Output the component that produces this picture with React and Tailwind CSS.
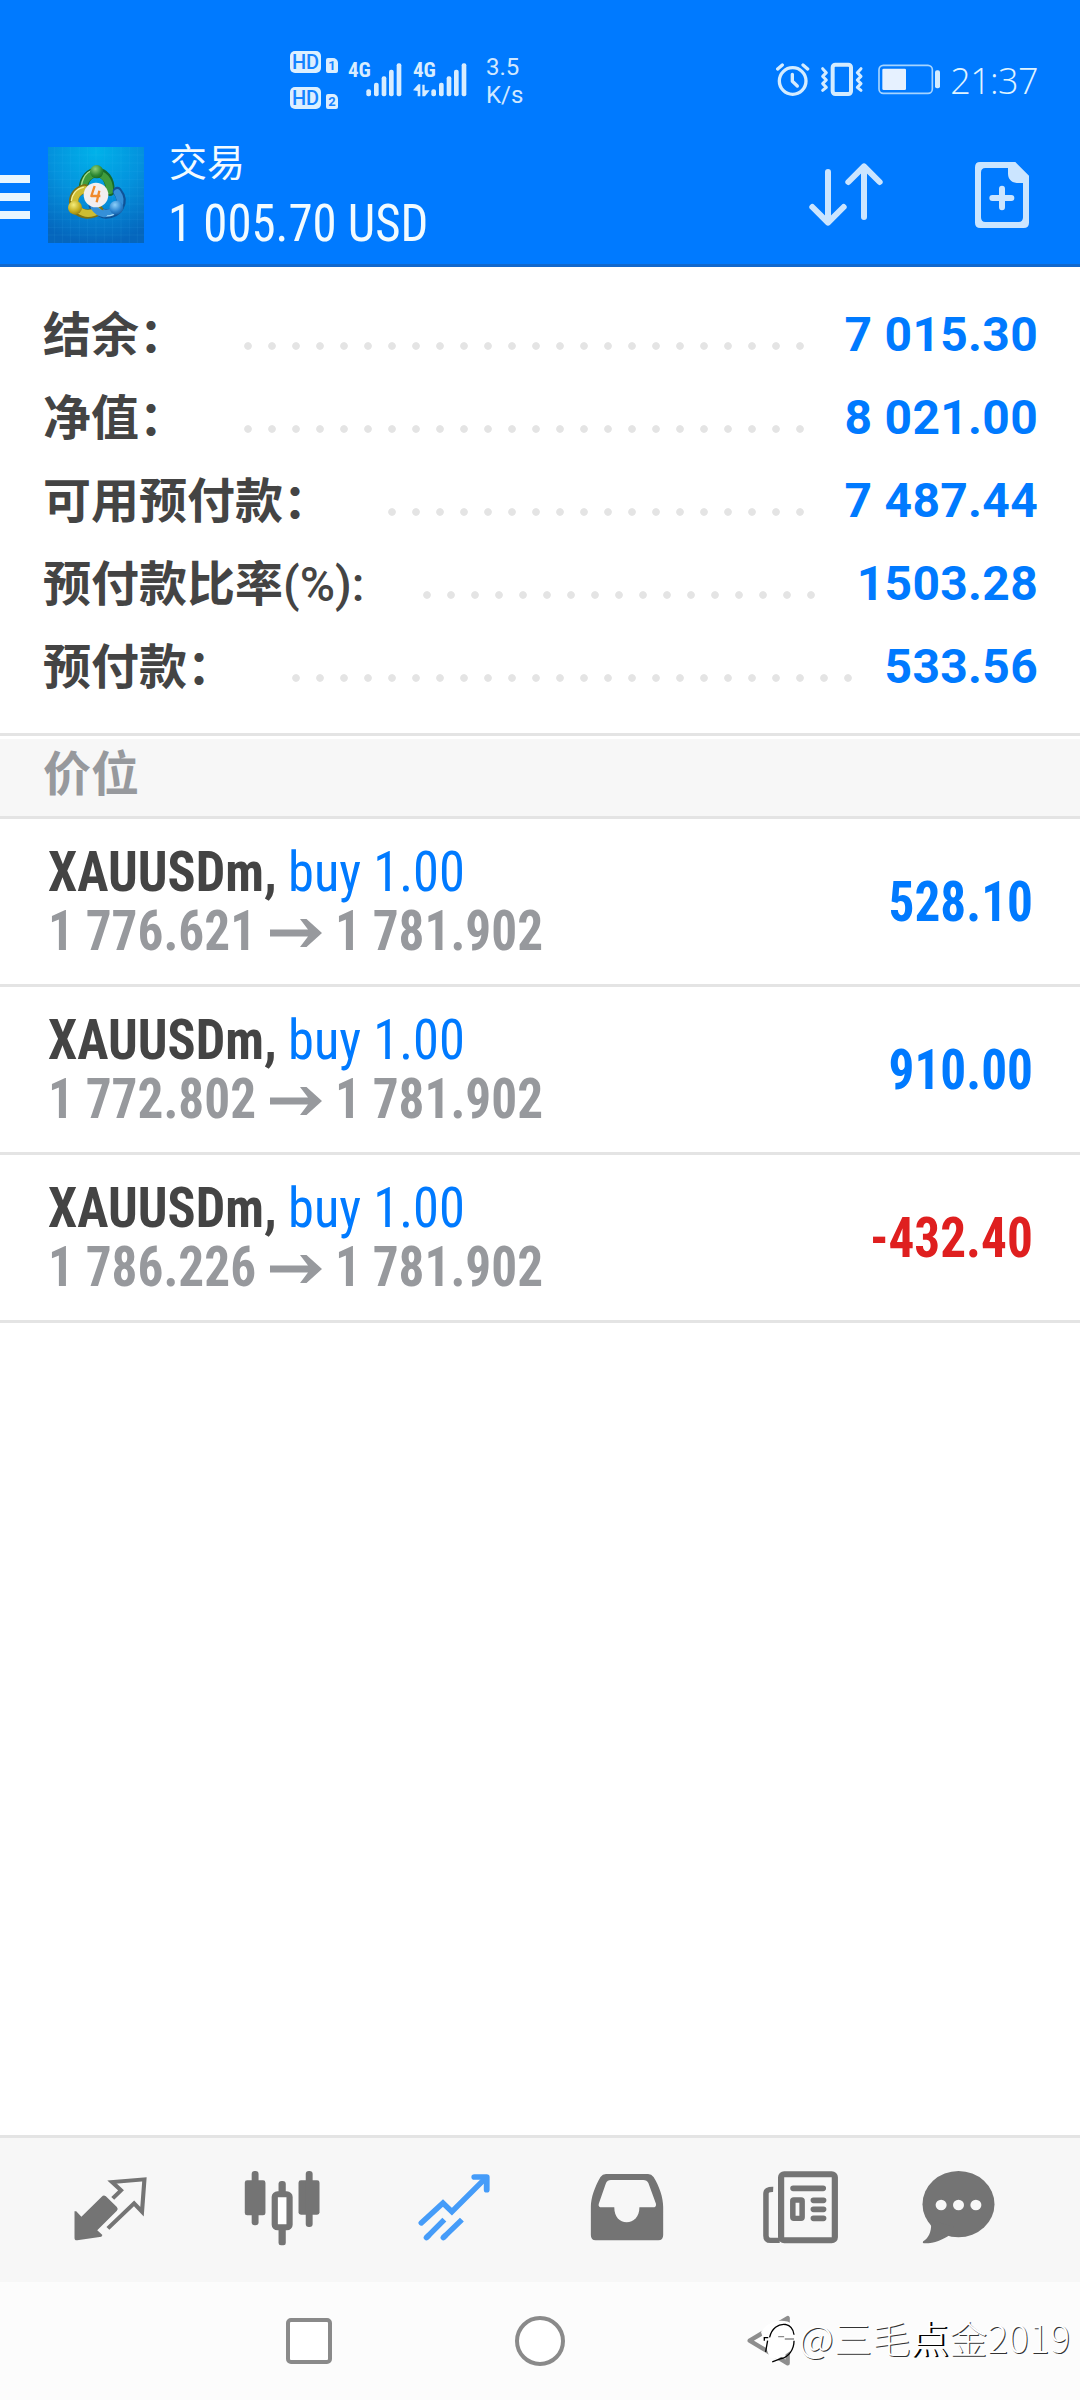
const summary = [
  { label: "结余：", value: "7 015.30", labelW: "w-[193px]", dotsW: "w-[576px]" },
  { label: "净值：", value: "8 021.00", labelW: "w-[193px]", dotsW: "w-[576px]" },
  { label: "可用预付款：", value: "7 487.44", labelW: "w-[337px]", dotsW: "w-[432px]" },
  { label: "预付款比率", suffix: "(%):", value: "1503.28", labelW: "w-[372px]", dotsW: "w-[408px]" },
  { label: "预付款：", value: "533.56", labelW: "w-[241px]", dotsW: "w-[576px]" },
];

const trades = [
  { open: "1 776.621", close: "1 781.902", profit: "528.10", color: "text-[#007aff]" },
  { open: "1 772.802", close: "1 781.902", profit: "910.00", color: "text-[#007aff]" },
  { open: "1 786.226", close: "1 781.902", profit: "-432.40", color: "text-[#df1f1f]" },
];

const cjk = "font-['Noto_Sans_CJK_SC',sans-serif]";

function HdBadge({ sim }) {
  return (
    <div className="flex h-[22px] gap-[5px]">
      <div className="flex h-[22px] w-[31px] items-center justify-center rounded-[5px] bg-[#dcefff] font-['Roboto',sans-serif] text-[20px] leading-none font-medium text-[#1583ff]">
        HD
      </div>
      <div className="mt-[7px] flex h-[15px] w-[12px] items-center justify-center rounded-[2px] rounded-tr-[5px] bg-[#dcefff] font-['Roboto',sans-serif] text-[13px] leading-none font-bold text-[#1583ff]">
        {sim}
      </div>
    </div>
  );
}

function Signal({ data }) {
  return (
    <div className="relative h-[34px] w-[54px]">
      <span className="absolute top-0 left-0 font-['Roboto',sans-serif] text-[21px] leading-[15px] font-bold font-stretch-75% text-[#d8edff]">
        4G
      </span>
      <svg viewBox="236 98 162 102" className="h-[34px] w-[54px]" fill="#d8edff">
        <rect x="291" y="177" width="14" height="21" rx="6" />
        <rect x="314" y="157" width="14" height="41" rx="6" />
        <rect x="337" y="138" width="14" height="60" rx="6" />
        <rect x="359" y="118" width="14" height="80" rx="6" />
        <rect x="382" y="99" width="14" height="99" rx="6" />
        {data && (
          <path d="M236 180L252 162H258V198H250V182ZM264 163H271V180H286L272 198H264Z" />
        )}
      </svg>
    </div>
  );
}

function StatusBar() {
  return (
    <div className="flex h-[96px] items-start pt-[50px] pr-[42px] pl-[290px]">
      <div className="mt-px flex flex-col gap-[14px]">
        <HdBadge sim="1" />
        <HdBadge sim="2" />
      </div>
      <div className="mt-[13px] ml-[10px] flex gap-[11px]">
        <Signal />
        <Signal data />
      </div>
      <div className="mt-[3px] ml-[19px] font-['Roboto',sans-serif] text-[24px] leading-[28px] text-[#d0e8ff]">
        <p>3.5</p>
        <p>K/s</p>
      </div>
      <div className="mt-[12px] ml-auto flex items-start">
        <svg viewBox="48 66 102 105" className="h-[35px] w-[34px]" fill="none" stroke="#d4ecff" strokeWidth="10" strokeLinecap="round" strokeLinejoin="round">
          <circle cx="98" cy="123" r="40" />
          <path d="M97 103V124L112 138" />
          <path d="M53 87L67 75M129 75L143 87" />
        </svg>
        <svg viewBox="180 66 132 105" className="ml-[10px] h-[35px] w-[44px]" fill="none" stroke="#d4ecff" strokeWidth="9" strokeLinecap="round" strokeLinejoin="round">
          <rect x="218" y="74" width="55" height="88" rx="8" strokeWidth="12" />
          <path d="M188 86L199 98L188 109L199 120L188 131L199 142L188 151" />
          <path d="M303 86L292 98L303 109L292 120L303 131L292 142L303 151" />
        </svg>
        <svg viewBox="354 66 189 105" className="ml-[14px] h-[35px] w-[63px]">
          <rect x="357" y="76" width="160" height="84" rx="13" fill="none" stroke="#a5d4ff" strokeWidth="5" />
          <rect x="367" y="86" width="71" height="64" rx="4" fill="#e6f1ff" />
          <rect x="525" y="91" width="15" height="54" rx="6" fill="#d4ecff" />
        </svg>
        <span className="ml-[9px] font-['Open_Sans',sans-serif] text-[36px] leading-[38px] font-light tracking-[-0.6px] text-[#e0f4ff]">
          21:37
        </span>
      </div>
    </div>
  );
}

function Logo() {
  return (
    <svg viewBox="144 51 288 288" className="h-24 w-24">
      <defs>
        <radialGradient id="bg" cx="0.5" cy="0.05" r="0.95">
          <stop offset="0" stopColor="#00b2ea" />
          <stop offset="0.5" stopColor="#0492dd" />
          <stop offset="1" stopColor="#0566bd" />
        </radialGradient>
        <radialGradient id="green" cx="0.4" cy="0.3" r="0.8">
          <stop offset="0" stopColor="#8fd07a" />
          <stop offset="0.6" stopColor="#2f8a34" />
          <stop offset="1" stopColor="#15601f" />
        </radialGradient>
        <radialGradient id="yellow" cx="0.4" cy="0.3" r="0.8">
          <stop offset="0" stopColor="#f4ec7c" />
          <stop offset="0.6" stopColor="#c3ac1c" />
          <stop offset="1" stopColor="#857410" />
        </radialGradient>
        <radialGradient id="blue" cx="0.4" cy="0.3" r="0.8">
          <stop offset="0" stopColor="#8dd0fa" />
          <stop offset="0.6" stopColor="#2b83cf" />
          <stop offset="1" stopColor="#0f559c" />
        </radialGradient>
      </defs>
      <rect x="144" y="51" width="288" height="288" fill="url(#bg)" />
      <path
        d="M164 51V339M188 51V339M212 51V339M238 51V339M263 51V339M288 51V339M313 51V339M338 51V339M363 51V339M388 51V339M412 51V339M144 75H432M144 99H432M144 124H432M144 149H432M144 173H432M144 198H432M144 222H432M144 246H432M144 268H432M144 292H432M144 315H432"
        stroke="#5cc4ff"
        strokeOpacity="0.14"
        strokeWidth="2"
      />
      <g fill="none" strokeLinecap="round">
        <path d="M250 176C252 112 332 108 330 184" stroke="#17692a" strokeWidth="28" />
        <path d="M250 174C254 118 328 114 329 182" stroke="#3f9c3c" strokeWidth="21" />
        <path d="M244 168C250 128 274 118 290 120" stroke="#a6dc8c" strokeWidth="4" />
        <path d="M352 184C378 216 354 252 318 252C300 250 288 240 280 228" stroke="#0f5398" strokeWidth="28" />
        <path d="M352 188C372 216 352 248 318 250C300 248 290 238 284 228" stroke="#3590d8" strokeWidth="21" />
        <path d="M280 236C296 258 320 262 340 254" stroke="#a5dafa" strokeWidth="4" />
        <path d="M254 176C212 186 206 244 258 252C276 253 288 248 296 240" stroke="#7d7113" strokeWidth="28" />
        <path d="M252 178C216 190 212 240 258 250C272 251 284 248 292 242" stroke="#cdbd33" strokeWidth="21" />
        <path d="M250 172C226 176 216 196 214 212" stroke="#f6f09a" strokeWidth="4" />
        <path d="M282 232C290 244 300 250 312 252" stroke="#3590d8" strokeWidth="20" />
      </g>
      <circle cx="290" cy="125" r="20" fill="url(#green)" />
      <circle cx="225" cy="233" r="21" fill="url(#yellow)" />
      <circle cx="349" cy="233" r="21" fill="url(#blue)" />
      <circle cx="288" cy="195" r="37" fill="#f1eef0" />
      <path d="M284 168L274 198H301M298 182L290 217" fill="none" stroke="#f08a2c" strokeWidth="7" strokeLinejoin="round" />
    </svg>
  );
}

function Header() {
  return (
    <header className="flex h-[171px] items-start border-b-[3px] border-[#1268cc]">
      <div className="mt-[79px] flex w-[30px] flex-col gap-[10px]">
        <div className="h-2 bg-[#e8f6ff]" />
        <div className="h-2 bg-[#e8f6ff]" />
        <div className="h-2 bg-[#e8f6ff]" />
      </div>
      <div className="mt-[51px] ml-[18px]">
        <Logo />
      </div>
      <div className="mt-[43px] ml-[24px] flex w-[272px] flex-col text-[#f2fbff]">
        <span className={`h-[53px] pl-px text-[38px] leading-[42px] ${cjk}`}>交易</span>
        <span className="origin-left scale-x-[0.957] font-['Roboto',sans-serif] text-[51px] leading-[64px] whitespace-nowrap font-stretch-75%">
          1 005.70 USD
        </span>
      </div>
      <svg viewBox="84 96 228 198" className="mt-[66px] ml-auto h-[66px] w-[76px]" fill="none" stroke="#cbe5ff" strokeWidth="18" strokeLinecap="round" strokeLinejoin="round">
        <path d="M144 126V276M97 231L144 278L191 231" />
        <path d="M252 261V110M205 156L252 109L299 156" />
      </svg>
      <svg viewBox="582 93 168 204" className="mt-[65px] mr-[50px] ml-[90px] h-[68px] w-[56px]">
        <path
          fillRule="evenodd"
          fill="#cbe5ff"
          d="M600 96H706L747 137V278Q747 294 731 294H601Q585 294 585 278V112Q585 96 600 96ZM616 114Q603 114 603 128V262Q603 276 616 276H716Q729 276 729 262V159H710C692 157 684 146 684 130V114Z"
        />
        <path d="M637 204H694M666 176V232" stroke="#cbe5ff" strokeWidth="18" strokeLinecap="round" />
      </svg>
    </header>
  );
}

function SummaryRow({ row }) {
  return (
    <div className="flex h-[83px] items-center pr-[42px] pl-[43px]">
      <span className={`shrink-0 pb-[7px] text-[48px] leading-[76px] font-bold whitespace-nowrap text-[#444444] ${row.labelW} ${cjk}`}>
        {row.label}
        {row.suffix && <span className="font-['Roboto',sans-serif] leading-none font-medium">{row.suffix}</span>}
      </span>
      <div
        className={`mt-[23px] h-[24px] shrink-0 bg-[radial-gradient(circle,#e4e4e4_3.4px,transparent_4.2px)] bg-[length:24px_24px] ${row.dotsW}`}
      />
      <span className="ml-auto font-['Roboto',sans-serif] text-[48px] leading-[83px] font-bold tracking-[0.3px] whitespace-nowrap text-[#007aff]">
        {row.value}
      </span>
    </div>
  );
}

function Trade({ trade }) {
  return (
    <div className="flex h-[168px] items-center justify-between border-b-[3px] border-[#e4e4e4] pr-[47px] pl-[48px] font-['Roboto',sans-serif] text-[55px] font-bold whitespace-nowrap font-stretch-75%">
      <div className="flex flex-col">
        <div className="flex h-[59px] items-center leading-[59px]">
          <span className="w-[240px] origin-left scale-x-[0.949] text-[#444444]">XAUUSDm,</span>
          <span className="origin-left scale-x-[0.955] font-normal text-[#007aff]">buy 1.00</span>
        </div>
        <div className="flex h-[59px] items-center leading-[59px] text-[#97999d]">
          <span className="w-[222px] origin-left scale-x-[0.932]">{trade.open}</span>
          <svg viewBox="0 0 52 28" className="mt-[3px] mr-[13px] h-[28px] w-[52px]" fill="#97999d">
            <path d="M0 10.500H38L30 0H36.500L52 14L36.500 28H30L38 17.500H0Z" />
          </svg>
          <span className="origin-left scale-x-[0.932]">{trade.close}</span>
        </div>
      </div>
      <span className={`mt-[2px] origin-right scale-x-[0.932] ${trade.color}`}>{trade.profit}</span>
    </div>
  );
}

const navSvg = "h-[80px] w-[83px]";

function TabBar() {
  return (
    <nav className="flex h-[147px] items-start border-t-[3px] border-[#e4e4e4] bg-[#f7f7f7] pt-[29px] pl-[24px] text-[#747474]">
      <div className="flex w-[172px] justify-center">
        <svg viewBox="199 170 241 240" preserveAspectRatio="none" className={navSvg} fill="currentColor">
          <path d="M215 303H220L235 319L294 259Q300 252 306 258L338 290Q343 296 338 301L281 360L296 374L293 379L223 390Q215 391 215 382Z" />
          <path d="M326 264L350 240L324 215L418 207L411 304L388 279L312 354" fill="none" stroke="currentColor" strokeWidth="12" />
        </svg>
      </div>
      <div className="flex w-[172px] justify-center">
        <svg viewBox="698 170 241 240" preserveAspectRatio="none" className={navSvg} fill="currentColor">
          <rect x="709" y="210" width="60" height="105" rx="7" />
          <rect x="729" y="182" width="20" height="163" rx="9" />
          <rect x="865" y="210" width="61" height="103" rx="7" />
          <rect x="886" y="182" width="20" height="168" rx="9" />
          <rect x="807" y="212" width="21" height="50" rx="9" />
          <rect x="807" y="345" width="21" height="60" rx="7" />
          <rect x="796" y="252" width="43" height="99" rx="8" fill="#fff" stroke="currentColor" strokeWidth="18" />
        </svg>
      </div>
      <div className="flex w-[172px] justify-center text-[#459cf9]">
        <svg viewBox="1198 170 241 240" preserveAspectRatio="none" className={navSvg} fill="none" stroke="currentColor" strokeWidth="16">
          <path d="M1222 338L1285 278L1311 304L1408 204" strokeLinecap="round" />
          <path d="M1376 200H1412V238" strokeWidth="17" strokeLinecap="round" strokeLinejoin="round" />
          <path d="M1237 382L1289 328M1286 382L1340 328" />
          <path d="M1237 382L1243 376M1286 382L1292 376" strokeLinecap="round" />
        </svg>
      </div>
      <div className="flex w-[172px] justify-center">
        <svg viewBox="129 170 241 240" preserveAspectRatio="none" className={navSvg} fill="currentColor">
          <path
            fillRule="evenodd"
            d="M190 191H312Q322 191 328 200C345 228 356 262 356 290V374Q356 390 342 390H160Q146 390 146 374V290C146 262 158 228 174 200Q180 191 190 191ZM204 209Q194 209 190 218L169 280Q166 291 178 291H214C214 320 230 336 250 336S287 320 287 291H326Q337 291 335 280L313 218Q309 209 298 209Z"
          />
        </svg>
      </div>
      <div className="flex w-[172px] justify-center">
        <svg viewBox="629 170 241 240" preserveAspectRatio="none" className={navSvg} fill="none" stroke="currentColor" strokeWidth="18">
          <rect x="699" y="191.500" width="156" height="198.500" rx="9" />
          <path d="M676 237Q655 236 655 250V376Q655 390 668 390H695" strokeWidth="16" />
          <path d="M734 234H821M793 270H822M793 297H822M793 324H822" strokeLinecap="round" strokeWidth="17" />
          <rect x="733" y="269" width="27" height="55" rx="3" strokeWidth="16" />
        </svg>
      </div>
      <div className="flex w-[148px] justify-center">
        <svg viewBox="1093 170 241 240" preserveAspectRatio="none" className={navSvg} fill="currentColor">
          <ellipse cx="1213.500" cy="281.500" rx="104.500" ry="99.500" />
          <path d="M1122 326Q1134 342 1134 349C1132 375 1120 387 1111 393Q1107 399 1116 399C1145 399 1168 387 1184 377L1200 350Z" />
          <g fill="#f7f7f7">
            <circle cx="1163" cy="284" r="16" />
            <circle cx="1213.500" cy="284" r="16" />
            <circle cx="1264" cy="284" r="16" />
          </g>
        </svg>
      </div>
    </nav>
  );
}

function Watermark() {
  return (
    <div className="absolute top-[33px] left-[761px] flex items-start whitespace-nowrap">
      <svg viewBox="78 45 112 150" className="h-[50px] w-[37px]" fill="none">
        <path d="M78 96C96 66 128 56 158 64C186 74 190 112 178 140C166 160 146 166 128 178L104 172L92 140Z" fill="#fff" />
        <path d="M88 122V113H100M104 112C110 86 130 70 152 73C166 76 176 88 178 104M98 122L92 156M178 122C178 150 160 172 140 176L112 186" stroke="#000" strokeWidth="4" />
        <path d="M130 110H148M150 117H178" stroke="#8c8c8c" strokeWidth="4" />
      </svg>
      <span className={`ml-px text-[38px] leading-[44px] font-light tracking-[0.4px] text-white [text-shadow:1px_1px_0.500px_#333] ${cjk}`}>
        @三毛<span className="[text-shadow:1px_1px_0_#000,2px_1px_0_#000]">点</span>金2019
      </span>
    </div>
  );
}

function SystemNav() {
  return (
    <div className="relative flex h-[118px] items-start bg-[#fcfcfc] pt-[33px] pl-[286px]">
      <div className="mt-[3px] h-[46px] w-[46px] rounded-[5px] border-[4.5px] border-[#8a8a8a] bg-white" />
      <div className="mt-[1px] ml-[183px] h-[50px] w-[50px] rounded-full border-[4.5px] border-[#8a8a8a] bg-white" />
      <svg viewBox="36 45 132 156" className="ml-[182px] h-[52px] w-[44px]" fill="#fff" stroke="#8e8e8e" strokeWidth="13" strokeLinejoin="round">
        <path d="M44 122L158 54V190Z" />
      </svg>
      <Watermark />
    </div>
  );
}

export default function App() {
  return (
    <div className="flex h-[2400px] w-[1080px] flex-col overflow-hidden bg-white">
      <div className="bg-[#007aff]">
        <StatusBar />
        <Header />
      </div>
      <section className="h-[466px] pt-[26px]">
        {summary.map((row) => (
          <SummaryRow key={row.label} row={row} />
        ))}
      </section>
      <div className="h-[86px] border-y-[3px] border-[#e4e4e4] pt-[3px]">
        <div className={`h-full bg-[#f7f7f7] pl-[43px] text-[48px] leading-[62px] font-bold text-[#97999d] ${cjk}`}>价位</div>
      </div>
      {trades.map((trade) => (
        <Trade key={trade.open} trade={trade} />
      ))}
      <div className="flex-1" />
      <TabBar />
      <SystemNav />
    </div>
  );
}
